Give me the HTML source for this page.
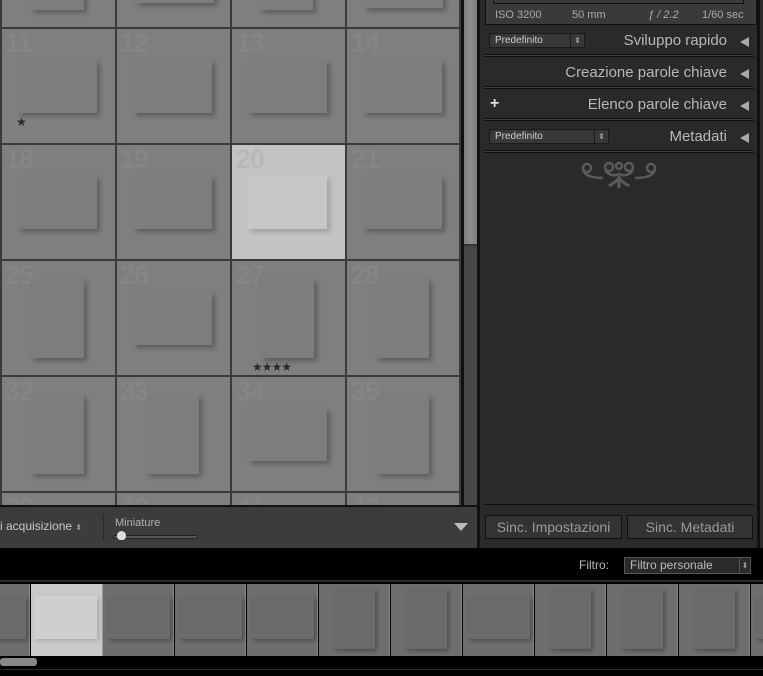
<!DOCTYPE html>
<html><head><meta charset="utf-8"><style>
*{margin:0;padding:0;box-sizing:border-box}
body{width:763px;height:676px;overflow:hidden;background:#000;position:relative;font-family:"Liberation Sans",sans-serif}
.a{position:absolute;white-space:nowrap}
.grid{left:0;top:0;width:461px;height:505px;background:#7f7f7f;overflow:hidden}
.vl{position:absolute;top:0;width:2px;height:505px;background:#3a3a3a}
.hl{position:absolute;left:0;width:461px;height:2px;background:#3a3a3a}
.n{position:absolute;font-weight:bold;font-size:27px;color:#858585;letter-spacing:-1px;line-height:1}
.L,.P{position:absolute;background:#7d7d7d;box-shadow:3px 3px 5px rgba(0,0,0,.28)}
.L{width:79px;height:53px}.P{width:53px;height:79px}
.st{position:absolute;color:#2a2a2a;font-size:12px;line-height:1}
.panel{left:480px;top:0;width:283px;height:548px;background:#2a2a2a}
.hd{position:absolute;right:14px;font-size:15px;color:#b8b8b8;text-align:right;white-space:nowrap}
.tri{position:absolute;right:14px;width:0;height:0;border-top:5px solid transparent;border-bottom:5px solid transparent;border-right:9px solid #aaa}
.sep{position:absolute;left:4px;width:270px;height:3px;border-top:1px solid #111;border-bottom:1px solid #111;background:#3c3c3c}
.sel{position:absolute;height:15px;background:#383838;border:1px solid #1a1a1a;color:#cfcfcf;font-size:10px;padding-left:5px;line-height:13px}
.sel i{position:absolute;right:0;top:0;width:14px;height:13px;border-left:1px solid #1a1a1a;font-style:normal;font-size:8px;text-align:center;color:#999}
.btn{position:absolute;top:515px;height:24px;border:1px solid #111;background:#333;color:#9a9a9a;font-size:14px;text-align:center;line-height:22px}
.fc{position:absolute;top:584px;width:71px;height:72px;background:#6e6e6e;border-right:1px solid #8a8a8a}
.fL{position:absolute;left:4px;top:12px;width:63px;height:43px;background:#6a6a6a;box-shadow:2px 2px 4px rgba(0,0,0,.3)}
.fP{position:absolute;left:14px;top:5px;width:42px;height:60px;background:#6a6a6a;box-shadow:2px 2px 4px rgba(0,0,0,.3)}
</style></head><body>
<div class="a grid">
 <div class="P" style="left:31px;top:-69px"></div>
 <div class="L" style="left:135px;top:-50px"></div>
 <div class="P" style="left:260px;top:-69px"></div>
 <div class="L" style="left:364px;top:-45px"></div>
 <div class="a" style="left:231px;top:144px;width:115px;height:116px;background:#c3c3c3;border:1px solid #e2e2e2"></div>
 <div class="n" style="left:5px;top:30px">11</div><div class="n" style="left:120px;top:30px">12</div><div class="n" style="left:236px;top:30px">13</div><div class="n" style="left:351px;top:30px">14</div>
 <div class="L" style="left:18px;top:60px"></div><div class="L" style="left:133px;top:60px"></div><div class="L" style="left:248px;top:60px"></div><div class="L" style="left:363px;top:60px"></div>
 <div class="st" style="left:16px;top:116px">★</div>
 <div class="n" style="left:5px;top:146px">18</div><div class="n" style="left:120px;top:146px">19</div><div class="n" style="left:236px;top:146px;color:#b8b8b8">20</div><div class="n" style="left:351px;top:146px">21</div>
 <div class="L" style="left:18px;top:176px"></div><div class="L" style="left:133px;top:176px"></div><div class="L" style="left:248px;top:176px;background:#c7c7c7;box-shadow:3px 3px 5px rgba(0,0,0,.18)"></div><div class="L" style="left:363px;top:176px"></div>
 <div class="n" style="left:5px;top:262px">25</div><div class="n" style="left:120px;top:262px">26</div><div class="n" style="left:236px;top:262px">27</div><div class="n" style="left:351px;top:262px">28</div>
 <div class="P" style="left:31px;top:279px"></div><div class="L" style="left:133px;top:292px"></div><div class="P" style="left:261px;top:279px"></div><div class="P" style="left:376px;top:279px"></div>
 <div class="st" style="left:252px;top:361px;letter-spacing:-1px">★★★★</div>
 <div class="n" style="left:5px;top:378px">32</div><div class="n" style="left:120px;top:378px">33</div><div class="n" style="left:236px;top:378px">34</div><div class="n" style="left:351px;top:378px">35</div>
 <div class="P" style="left:31px;top:395px"></div><div class="P" style="left:146px;top:395px"></div><div class="L" style="left:248px;top:408px"></div><div class="P" style="left:376px;top:395px"></div>
 <div class="n" style="left:5px;top:494px">39</div><div class="n" style="left:120px;top:494px">40</div><div class="n" style="left:236px;top:494px">41</div><div class="n" style="left:351px;top:494px">42</div>
 <div class="vl" style="left:0"></div><div class="vl" style="left:115px"></div><div class="vl" style="left:230px"></div><div class="vl" style="left:345px"></div><div class="vl" style="left:459px"></div>
 <div class="hl" style="top:27px"></div><div class="hl" style="top:143px"></div><div class="hl" style="top:259px"></div><div class="hl" style="top:375px"></div><div class="hl" style="top:491px"></div>
</div>
<div class="a" style="left:461px;top:0;width:19px;height:505px;background:#111"></div>
<div class="a" style="left:464px;top:0;width:13px;height:505px;background:#474747"></div>
<div class="a" style="left:464px;top:0;width:13px;height:246px;background:linear-gradient(90deg,#7c7c7c,#8e8e8e,#7c7c7c);border-bottom:2px solid #333"></div>
<div class="a" style="left:0;top:505px;width:480px;height:43px;background:#3c3c3c;border-top:2px solid #111;border-right:3px solid #111"></div>
<div class="a" style="left:0;top:519px;font-size:12px;color:#c8c8c8">i acquisizione <span style="font-size:8px;color:#999">⬍</span></div>
<div class="a" style="left:103px;top:514px;width:1px;height:27px;background:#2a2a2a"></div>
<div class="a" style="left:115px;top:517px;font-size:11px;color:#b0b0b0">Miniature</div>
<div class="a" style="left:113px;top:535px;width:85px;height:4px;border:1px solid #222;background:#555;border-radius:2px"></div>
<div class="a" style="left:117px;top:531px;width:9px;height:9px;background:#ddd;border-radius:50% 50% 40% 40%"></div>
<div class="a" style="left:454px;top:523px;border-left:7px solid transparent;border-right:7px solid transparent;border-top:8px solid #bbb"></div>
<div class="a panel">
 <div class="a" style="left:5px;top:-2px;width:272px;height:27px;border:1px solid #111;background:#3a3a3a"></div>
 <div class="a" style="left:13px;top:-2px;width:251px;height:6px;border:1px solid #111;border-top:none"></div>
 <div class="a" style="left:15px;top:9px;font-size:11px;color:#aaa;width:248px">ISO 3200<span class="a" style="left:77px">50 mm</span><span class="a" style="left:153px;font-style:italic">ƒ / 2.2</span><span class="a" style="left:207px">1/60 sec</span></div>
 <div class="sel" style="left:9px;top:33px;width:96px">Predefinito<i>⬍</i></div>
 <div class="hd" style="top:32px;right:36px">Sviluppo rapido</div><div class="tri" style="top:37px"></div>
 <div class="sep" style="top:54px"></div>
 <div class="hd" style="top:64px;right:36px">Creazione parole chiave</div><div class="tri" style="top:69px"></div>
 <div class="sep" style="top:86px"></div>
 <div class="a" style="left:10px;top:95px;color:#ddd;font-size:16px;font-weight:bold">+</div>
 <div class="hd" style="top:96px;right:36px">Elenco parole chiave</div><div class="tri" style="top:101px"></div>
 <div class="sep" style="top:118px"></div>
 <div class="sel" style="left:9px;top:129px;width:120px">Predefinito<i>⬍</i></div>
 <div class="hd" style="top:128px;right:36px">Metadati</div><div class="tri" style="top:133px"></div>
 <div class="sep" style="top:150px"></div>
 <svg class="a" style="left:97px;top:158px" width="84" height="34" viewBox="0 0 84 34" fill="none" stroke="#5a5a5a" stroke-width="2.5">
  <circle cx="10" cy="10" r="4"/><circle cx="74" cy="10" r="4"/>
  <path d="M6 12c2 6 10 8 20 8M78 12c-2 6-10 8-20 8"/>
  <circle cx="32" cy="9" r="4"/><circle cx="52" cy="9" r="4"/>
  <path d="M28 12c4 6 10 6 14 4c4 2 10 2 14-4"/>
  <circle cx="42" cy="8" r="3"/>
  <path d="M42 18v12M42 20c-3 4-7 6-10 8M42 20c3 4 7 6 10 8" stroke-width="3"/>
 </svg>
 <div class="a" style="left:4px;top:504px;width:270px;height:1px;background:#111"></div>
 <div class="a" style="left:277px;top:0;width:3px;height:548px;background:#111"></div>
</div>
<div class="btn" style="left:485px;width:137px">Sinc. Impostazioni</div>
<div class="btn" style="left:627px;width:126px">Sinc. Metadati</div>
<div class="a" style="left:0;top:580px;width:763px;height:2px;background:#2a2a2a"></div>
<div class="a" style="left:579px;top:558px;font-size:12px;color:#bbb">Filtro:</div>
<div class="a" style="left:624px;top:557px;width:127px;height:17px;border:1px solid #555;background:#2a2a2a;color:#bbb;font-size:12px;padding-left:5px;line-height:15px">Filtro personale<span class="a" style="right:0;top:0;width:11px;height:15px;border-left:1px solid #555;font-size:8px;text-align:center;color:#999">⬍</span></div>
<div class="fc" style="left:-41px"><div class="fL" style="left:4px"></div></div>
<div class="fc" style="left:31px;width:72px;background:#c9c9c9;border-right:1px solid #999"><div class="fL" style="left:3px;background:#cfcfcf;box-shadow:2px 2px 4px rgba(0,0,0,.15)"></div></div>
<div class="fc" style="left:103px"><div class="fL"></div></div>
<div class="fc" style="left:175px"><div class="fL"></div></div>
<div class="fc" style="left:247px"><div class="fL"></div></div>
<div class="fc" style="left:319px"><div class="fP"></div></div>
<div class="fc" style="left:391px"><div class="fP"></div></div>
<div class="fc" style="left:463px"><div class="fL"></div></div>
<div class="fc" style="left:535px"><div class="fP"></div></div>
<div class="fc" style="left:607px"><div class="fP"></div></div>
<div class="fc" style="left:679px"><div class="fP"></div></div>
<div class="fc" style="left:751px"><div class="fL"></div></div>
<div class="a" style="left:0;top:658px;width:37px;height:8px;background:#888;border-radius:3px"></div>
<div class="a" style="left:0;top:669px;width:763px;height:1px;background:#2a2a2a"></div>
</body></html>
